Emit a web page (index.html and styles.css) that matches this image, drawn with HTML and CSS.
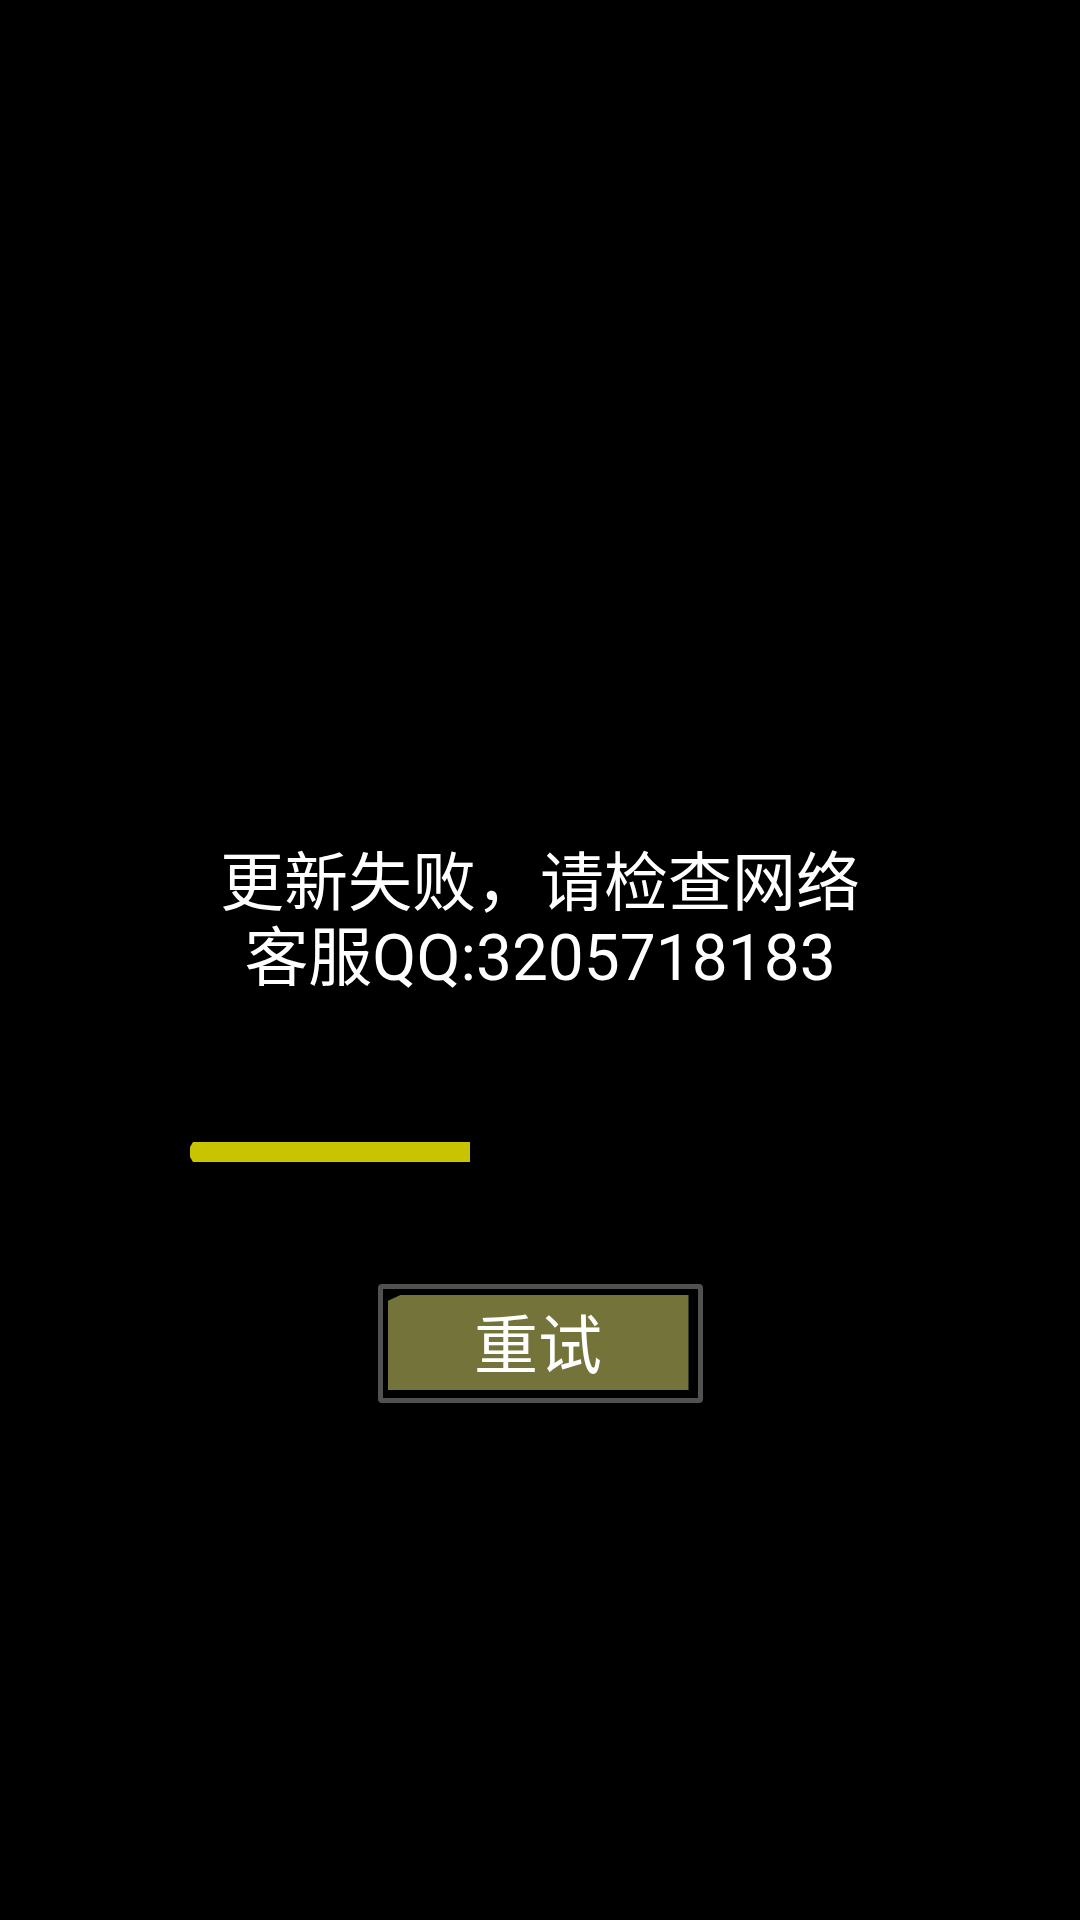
FILE: index.html
```html
<!DOCTYPE html>
<html lang="zh-CN">
<head>
<meta charset="UTF-8" />
<meta name="viewport" content="width=device-width, initial-scale=1" />
<title>更新失败</title>
<link rel="stylesheet" href="styles.css">
</head>
<body>

<div class="screen">
  <!-- Update status -->
  <p class="message">更新失败，请检查网络<br />客服QQ:3205718183</p>

  <!-- Download progress -->
  <div class="progress" role="progressbar" aria-valuenow="40" aria-valuemin="0" aria-valuemax="100">
    <div class="progress-fill" style="width: 40%"></div>
  </div>

  <!-- Retry -->
  <button class="retry" type="button"><span class="retry-face">重试</span></button>
</div>

</body>
</html>
```

FILE: styles.css
```css
/* --- Basic Reset & Fonts --- */
* {
  box-sizing: border-box;
}
body {
  margin: 0; padding: 0;
  background: #000;
  color: #fff;
  font-family: Roboto, "Noto Sans CJK SC", sans-serif;
  min-height: 100vh;
}

.screen {
  display: flex;
  flex-direction: column;
  align-items: center;
  padding-top: 846px;
}

/* --- Message --- */
.message {
  margin: 0;
  font-size: 64px;
  line-height: 75px;
  text-align: center;
}

/* --- Progress bar --- */
.progress {
  width: 700px;
  height: 20px;
  margin-top: 146px;
}
.progress-fill {
  height: 100%;
  background: #c8c400;
  clip-path: polygon(3px 0, 100% 0, 100% 100%, 3px 100%, 0 calc(100% - 5px), 0 5px);
}

/* --- Retry button --- */
.retry {
  margin-top: 122px;
  width: 325px;
  height: 119px;
  padding: 6px 9px 8px 5px;
  background: #000;
  border: 5px solid #515151;
  border-radius: 4px;
  cursor: pointer;
}
.retry-face {
  display: flex;
  align-items: center;
  justify-content: center;
  width: 100%;
  height: 100%;
  padding-bottom: 6px;
  background: #74743a;
  color: #fff;
  font-family: Roboto, "Noto Sans CJK SC", sans-serif;
  font-size: 64px;
  clip-path: polygon(0 6px, 13px 0, 100% 0, 100% 100%, 0 100%);
}
```
